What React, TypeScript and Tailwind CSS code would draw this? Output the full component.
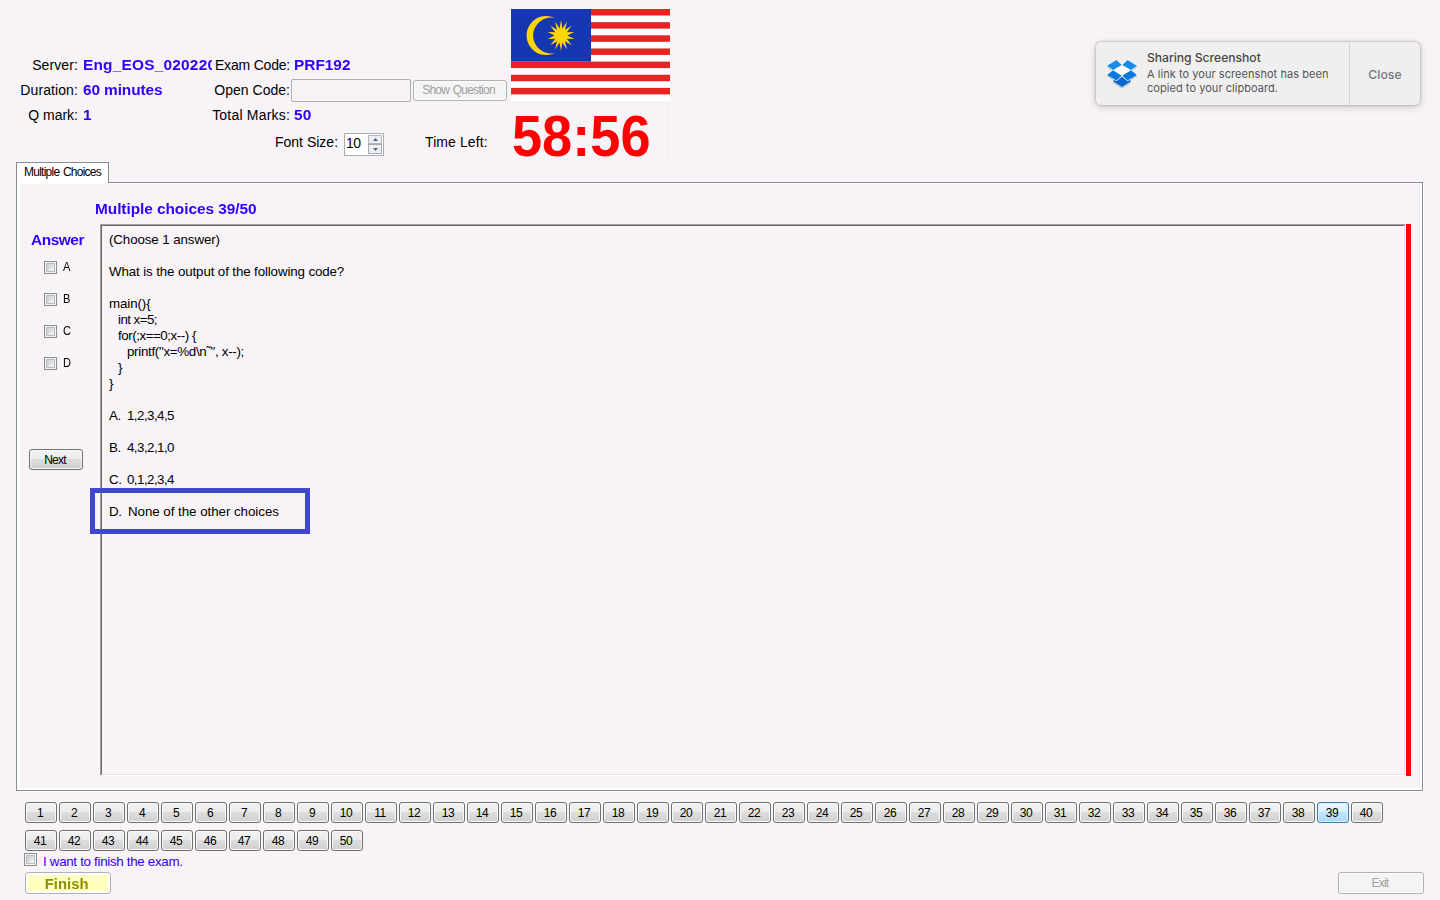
import React from "react";

const questions = Array.from({ length: 50 }, (_, i) => i + 1);

function Checkbox() {
  return (
    <span className="block size-[13px] shrink-0 border border-[#8b8d8f] bg-[#f4f4f4] p-px">
      <span className="block size-full border border-[#b9bdc2] bg-linear-to-br from-[#c6cad0] to-[#f6f6f6]" />
    </span>
  );
}

function Value({ children }: { children: React.ReactNode }) {
  return (
    <span className="inline-block origin-left scale-x-[1.1] text-[14px] font-bold whitespace-nowrap text-[#2f00ff]">
      {children}
    </span>
  );
}

function NumberButton({ n }: { n: number }) {
  const active = n === 39;
  return (
    <button
      className={
        active
          ? "h-[21px] w-8 rounded-[3px] border border-[#3c7fb1] bg-[linear-gradient(#eaf6fd_0%,#d9f0fc_48%,#bee6fd_50%,#a7d9f5_100%)] pr-[2px] text-[12px] leading-[20px] tracking-[-0.5px] shadow-[inset_0_0_0_1px_#d8f1fc]"
          : "h-[21px] w-8 rounded-[3px] border border-[#707070] bg-[linear-gradient(#f2f2f2_0%,#ebebeb_48%,#dddddd_50%,#cfcfcf_100%)] pr-[2px] text-[12px] leading-[20px] tracking-[-0.5px] shadow-[inset_0_0_0_1px_#f8f8f8]"
      }
    >
      {n}
    </button>
  );
}

function Flag() {
  const points = Array.from({ length: 28 }, (_, i) => {
    const r = i % 2 === 0 ? 15.5 : 7.3;
    const a = (Math.PI * i) / 14 - Math.PI / 2;
    return `${50 + r * 0.88 * Math.cos(a)},${26.5 + r * Math.sin(a)}`;
  }).join(" ");
  return (
    <svg width="159" height="92" viewBox="0 0 159 92" className="block">
      <rect width="159" height="92" fill="#fff" />
      {[0, 1, 2, 3, 4, 5, 6].map((i) => (
        <rect key={i} y={i * 13.15} width="159" height="6.5" fill="#e52521" />
      ))}
      <rect width="80" height="52.6" fill="#1537b1" />
      <path d="M44.2 9.1A19.6 19.6 0 1 0 44.2 43.9A17.9 17.9 0 1 1 44.2 9.1Z" fill="#ffd504" />
      <polygon points={points} fill="#ffd504" />
    </svg>
  );
}

function DropboxIcon() {
  return (
    <svg width="32" height="30" viewBox="0 0 32 30" className="block drop-shadow-[0_1px_0.5px_rgba(0,0,0,0.25)]">
      <path d="M10.4 0.6L16 4.6L21.6 0.6L31 6.4L26 11.2L31 16L24.8 20V22.9L16 28.4L7.2 22.9V20L1 16L6 11.2L1 6.4Z" fill="#fff" />
      <path d="M10.4 1L1.2 6.7L7 11L15.8 5.9ZM21.6 1L16.2 5.9L25 11L30.8 6.7Z" fill="#1b8be8" />
      <path d="M7 11.3L1.2 16L10.4 21.5L15.8 16.8ZM25 11.3L16.2 16.8L21.6 21.5L30.8 16Z" fill="#0b78dc" />
      <path d="M16 17.7L10.4 22.3L7.5 20.5V22.7L16 28L24.5 22.7V20.5L21.6 22.3Z" fill="#0868cf" />
    </svg>
  );
}

function Header() {
  return (
    <header className="flex h-[162px] items-start">
      <div className="w-[511px] pt-[53px] text-[14px]">
        <div className="flex h-[25px] items-center">
          <span className="w-[78px] text-right tracking-[0.1px]">Server:</span>
          <span className="ml-[5px] w-[129px] overflow-hidden tracking-[0.2px]"><Value>Eng_EOS_020220</Value></span>
          <span className="w-[78px] text-right tracking-[-0.2px] whitespace-nowrap">Exam Code:</span>
          <span className="ml-1"><Value>PRF192</Value></span>
        </div>
        <div className="flex h-[25px] items-center">
          <span className="w-[78px] text-right tracking-[0.1px]">Duration:</span>
          <span className="ml-[5px] w-[129px] tracking-[-0.1px]"><Value>60 minutes</Value></span>
          <span className="w-[78px] text-right tracking-[0.02px] whitespace-nowrap">Open Code:</span>
          <span className="ml-px h-[23px] w-[120px] rounded-[2px] border border-[#afafb1]" />
          <button className="ml-[2px] h-[21px] w-[94px] rounded-[3px] border border-[#adb2b5] bg-[#f4f4f4] pr-[3px] text-[12px] leading-[19px] whitespace-nowrap text-[#a0a0a0] shadow-[inset_0_0_0_1px_#fcfcfc]">
            <span className="tracking-[-0.75px] [word-spacing:1px]">Show Question</span>
          </button>
        </div>
        <div className="flex h-[25px] items-center">
          <span className="w-[78px] text-right">Q mark:</span>
          <span className="ml-[5px] w-[127px]"><Value>1</Value></span>
          <span className="w-[80px] text-right whitespace-nowrap tracking-[0.2px]">Total Marks:</span>
          <span className="ml-1 tracking-[0.2px]"><Value>50</Value></span>
        </div>
        <div className="flex h-[30px] items-center pl-[275px]">
          <span className="-mt-px w-[63px] whitespace-nowrap">Font Size:</span>
          <span className="mt-[3px] ml-[6px] flex h-[23px] w-[40px] items-center justify-between border border-[#abadb3] bg-white pr-px pl-px">
            <span className="-mt-[2px] text-[14px] tracking-[-0.6px]">10</span>
            <span className="flex w-[14px] flex-col">
              <span className="flex h-[9px] items-center justify-center border border-[#b4b6bd] bg-[#efeff2]">
                <svg width="5" height="3" viewBox="0 0 5 3"><path d="M0 3L2.5 0L5 3Z" fill="#4a61a8" /></svg>
              </span>
              <span className="flex h-[10px] items-center justify-center border border-[#a9abb2] bg-[#efeff2]">
                <svg width="5" height="3" viewBox="0 0 5 3"><path d="M0 0L2.5 3L5 0Z" fill="#4a61a8" /></svg>
              </span>
            </span>
          </span>
          <span className="-mt-px ml-[41px] whitespace-nowrap tracking-[0.1px]">Time Left:</span>
        </div>
      </div>
      <div className="w-[159px] pt-[9px]">
        <Flag />
        <div className="mr-[2px] h-[62px] border-r border-[#f1eff4] pt-[7px]">
          <span className="ml-px block origin-left scale-x-[0.95] text-[57px] leading-[57px] font-bold text-[#ff0000]">58:56</span>
        </div>
      </div>
      <div className="mt-[42px] ml-[426px] flex h-[63px] w-[324px] rounded-[5px] bg-[#efefef] font-[Inter,sans-serif] shadow-[0_0_3px_rgba(0,0,0,0.3),0_2px_9px_rgba(0,0,0,0.17)]">
        <div className="flex w-[254px] border-r border-[#d3d3d3] pl-[10px]">
          <div className="pt-[17px]"><DropboxIcon /></div>
          <div className="pt-[8px] pl-[9px] whitespace-nowrap">
            <p className="text-[12.2px] leading-4 font-medium tracking-[-0.05px] text-[#484848]">Sharing Screenshot</p>
            <p className="mt-px text-[11px] leading-[14px] tracking-[0.05px] text-[#555]">
              A link to your screenshot has been
              <br />
              copied to your clipboard.
            </p>
          </div>
        </div>
        <span className="flex-1 pt-px text-center text-[12.2px] leading-[64px] font-medium tracking-[0.05px] text-[#757575]">Close</span>
      </div>
    </header>
  );
}

function Program() {
  return (
    <div className="flex-1 border border-t-[#a0a0a0] border-r-white border-b-white border-l-[#a0a0a0]">
      <div className="h-full border border-t-[#696969] border-r-[#e3e3e3] border-b-[#e3e3e3] border-l-[#696969] pt-[6px] pl-[7px] text-[13.33px] leading-4 whitespace-pre">
        <p className="tracking-[-0.1px]">(Choose 1 answer)</p>
        <p className="mt-4 tracking-[-0.12px]">What is the output of the following code?</p>
        <div className="mt-4 tracking-[-0.35px]">
          <p className="tracking-[-0.1px]">{"main(){"}</p>
          <p className="pl-[9px] tracking-[-0.55px]">int x=5;</p>
          <p className="pl-[9px] tracking-[-0.45px]">{"for(;x==0;x--) {"}</p>
          <p className="pl-[18px] tracking-[-0.3px]">{'printf("x=%d\\n˜", x--);'}</p>
          <p className="pl-[9px]">{"}"}</p>
          <p>{"}"}</p>
        </div>
        <div className="mt-4 flex flex-col gap-4">
          <p className="flex"><span className="w-[18px] tracking-[-0.5px]">A.</span><span className="tracking-[-0.55px]">1,2,3,4,5</span></p>
          <p className="flex"><span className="w-[18px] tracking-[-0.5px]">B.</span><span className="tracking-[-0.55px]">4,3,2,1,0</span></p>
          <p className="flex"><span className="w-[18px] tracking-[-0.5px]">C.</span><span className="tracking-[-0.55px]">0,1,2,3,4</span></p>
          <p className="flex"><span className="w-[19px] tracking-[-0.5px]">D.</span><span className="tracking-[-0.04px]">None of the other choices</span></p>
        </div>
      </div>
    </div>
  );
}

export default function App() {
  return (
    <div className="h-[900px] w-[1440px] overflow-hidden bg-[#f7f3f7] font-['Liberation_Sans',Arial,sans-serif] text-black">
      <Header />
      <main className="relative pl-4">
        <div className="relative z-10 h-[21px] w-[93px] border border-b-0 border-[#898c95] bg-white pl-[7px] text-[12px] leading-[18px] whitespace-nowrap">
          <span className="tracking-[-0.75px] [word-spacing:1px]">Multiple Choices</span>
        </div>
        <section className="-mt-px h-[609px] w-[1407px] border border-[#898c95] bg-white pt-px pr-px pb-[2px] pl-[3px] shadow-[1px_1px_0_#fff]">
          <div className="flex h-full flex-col bg-[#f7f3f7]">
            <h2 className="h-[40px] pt-[15px] pl-[75px] leading-5 tracking-[-0.05px]"><Value>Multiple choices 39/50</Value></h2>
            <div className="flex h-[552px]">
              <aside className="w-[80px] pl-[9px]">
                <h3 className="ml-[2px] h-[35px] pt-[6px] leading-5 tracking-[-0.4px]"><Value>Answer</Value></h3>
                <div className="flex flex-col gap-[19px] pt-[2px] pl-[15px]">
                  {["A", "B", "C", "D"].map((l) => (
                    <label key={l} className="flex h-[13px] items-center gap-[6px] text-[12px]">
                      <Checkbox />
                      <span className="-mt-px origin-left scale-x-[0.92]">{l}</span>
                    </label>
                  ))}
                </div>
                <button className="mt-[79px] block h-[21px] w-[54px] rounded-[3px] border border-[#707070] bg-[linear-gradient(#f2f2f2_0%,#ebebeb_48%,#dddddd_50%,#cfcfcf_100%)] pr-[2px] text-[12px] leading-[20px] tracking-[-0.8px] shadow-[inset_0_0_0_1px_#f8f8f8]">
                  Next
                </button>
              </aside>
              <Program />
              <span className="mr-[10px] w-[5px] bg-[#ff0000]" />
            </div>
          </div>
        </section>
        <div className="absolute top-[326px] left-[90px] z-10 h-[46px] w-[220px] border-[5px] border-[#3f48cc]" />
      </main>
      <footer className="pt-[11px] pr-4 pl-[25px]">
        <nav className="flex w-[1360px] flex-wrap gap-x-[2px] gap-y-[7px]">
          {questions.map((n) => (
            <NumberButton key={n} n={n} />
          ))}
        </nav>
        <label className="-ml-px flex h-[21px] items-start gap-[6px] pt-[2px] text-[13.33px] leading-[17px] tracking-[-0.3px] text-[#2f00ff]">
          <Checkbox />
          I want to finish the exam.
        </label>
        <div className="flex justify-between">
          <button className="h-[22px] w-[86px] rounded-[3px] border border-[#adb2b5] bg-[#ffffc0] pr-[3px] text-[14px] leading-[22px] font-bold text-[#8f8f00] shadow-[inset_0_0_0_2px_#fcfcfc]">
            <span className="inline-block scale-x-[1.06]">Finish</span>
          </button>
          <button className="h-[22px] w-[86px] rounded-[3px] border border-[#adb2b5] bg-[#f4f4f4] pr-[2px] text-[12px] leading-[20px] tracking-[-0.8px] text-[#a0a0a0] shadow-[inset_0_0_0_1px_#fcfcfc]">
            Exit
          </button>
        </div>
      </footer>
    </div>
  );
}
